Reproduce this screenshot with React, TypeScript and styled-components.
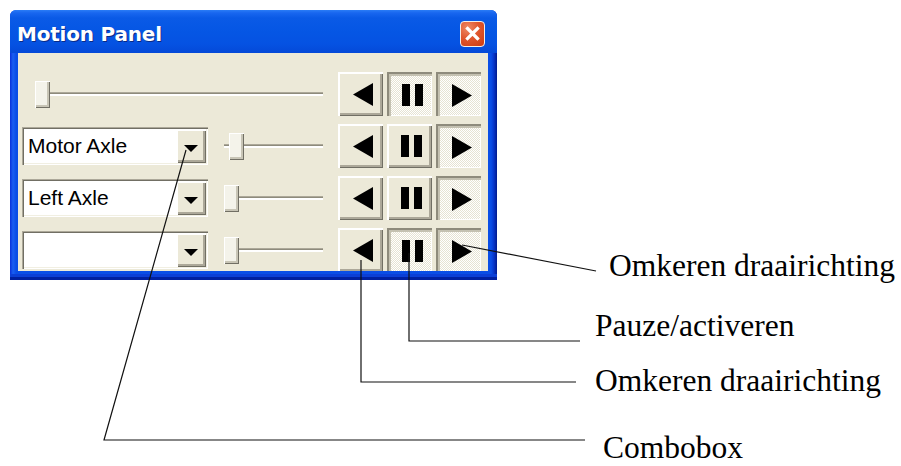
import React from "react";
import styled, { createGlobalStyle, css } from "styled-components";

const Global = createGlobalStyle`
  html, body { margin: 0; padding: 0; background: #ffffff; }
  body {
    width: 901px;
    height: 466px;
    overflow: hidden;
    font-family: "Liberation Sans", Arial, sans-serif;
  }
`;

const Page = styled.div`
  position: relative;
  width: 901px;
  height: 466px;
  padding: 10px 0 0 10px;
  box-sizing: border-box;
`;

const Window = styled.div`
  width: 487px;
  height: 270px;
  box-sizing: border-box;
  display: flex;
  flex-direction: column;
  border-radius: 6px 6px 0 0;
  overflow: hidden;
  padding: 0 9px 9px 8px;
  background: linear-gradient(to right, #0831d9 0px, #1a5ff2 3px, #0a4ee6 6px, #0a4ee6 calc(100% - 6px), #0634c8 calc(100% - 3px), #001a8c 100%);
  box-shadow: inset 0 -3px 0 #0020a0, inset 0 -6px 0 #0b3fd6;
`;

const TitleBar = styled.div`
  height: 43px;
  flex: none;
  margin: 0 -9px 0 -8px;
  padding: 0 12px 0 7px;
  display: flex;
  align-items: center;
  justify-content: space-between;
  background: linear-gradient(to bottom, #2a7cf6 0px, #1866ef 3px, #0a5ae6 8px, #0556e4 22px, #0552e2 34px, #0449d8 43px);
`;

const Title = styled.span`
  font-family: "DejaVu Sans", Verdana, sans-serif;
  font-weight: bold;
  font-size: 20px;
  color: #ffffff;
  letter-spacing: -0.2px;
  text-shadow: 1px 1px 0 #0a2a86;
  margin-top: 4px;
`;

const CloseButton = styled.div`
  width: 25px;
  height: 26px;
  box-sizing: border-box;
  border: 1px solid #f4eee8;
  border-radius: 4px;
  background: radial-gradient(circle at 30% 25%, #ee8a66 0%, #e0572e 45%, #cc3a10 100%);
  display: flex;
  align-items: center;
  justify-content: center;
  margin-top: 4px;
`;

const Content = styled.div`
  flex: 1;
  background: #ece9d8;
  overflow: hidden;
  padding: 19px 7px 0 4px;
  display: flex;
  flex-direction: column;
  gap: 8px;
`;

const Row = styled.div`
  height: 44px;
  flex: none;
  display: flex;
  align-items: center;
`;

const ComboBox = styled.div`
  width: 186px;
  height: 38px;
  box-sizing: border-box;
  margin-right: 16px;
  display: flex;
  align-items: center;
  background: #ffffff;
  padding: 2px;
  box-shadow: inset 1px 1px 0 #aca899, inset 2px 2px 0 #716f64, inset -1px -1px 0 #ffffff, inset -2px -2px 0 #f1efe2;
`;

const ComboText = styled.span`
  flex: 1;
  padding-left: 4px;
  font-family: "Liberation Sans", Arial, sans-serif;
  font-size: 21px;
  color: #000000;
  white-space: nowrap;
  overflow: hidden;
`;

const raised = css`
  background: #ece9d8;
  box-shadow: inset 2px 2px 0 #ffffff, inset -1px -1px 0 #716f64, inset -3px -3px 0 #aca899;
`;

const DropButton = styled.div`
  width: 30px;
  height: 34px;
  flex: none;
  display: flex;
  align-items: center;
  justify-content: center;
  padding-top: 4px;
  box-sizing: border-box;
  ${raised}
`;

const Slider = styled.div<{ $lead?: number }>`
  flex: 1;
  height: 28px;
  margin-left: ${(p) => p.$lead ?? 0}px;
  margin-right: 15px;
  display: flex;
  align-items: center;
  background:
    linear-gradient(to bottom,
      transparent 12px,
      #aca899 12px, #aca899 13px,
      #8e8b7c 13px, #8e8b7c 14px,
      #ffffff 14px, #ffffff 16px,
      transparent 16px);
`;

const Thumb = styled.div<{ $offset: number }>`
  width: 15px;
  height: 27px;
  box-sizing: border-box;
  margin-left: ${(p) => p.$offset}px;
  background: #f4f3ea;
  box-shadow: inset 1px 1px 0 #ffffff, inset -1px -1px 0 #716f64, inset -3px -3px 0 #c8c5b6;
`;

const ButtonGroup = styled.div`
  display: flex;
  gap: 4px;
`;

const MediaButton = styled.div<{ $pressed?: boolean }>`
  width: 45px;
  height: 44px;
  box-sizing: border-box;
  display: flex;
  align-items: center;
  justify-content: center;
  padding-left: 4px;
  ${(p) =>
    p.$pressed
      ? css`
          background: repeating-conic-gradient(#ffffff 0 25%, #e6e3d2 0 50%) 0 0 / 2px 2px;
          box-shadow: inset 2px 2px 0 #8e8b7c, inset 4px 4px 0 #c4c1b1, inset -1px -1px 0 #ffffff;
          padding-left: 6px;
          padding-top: 2px;
        `
      : css`
          ${raised}
        `}
`;

const Annotations = styled.svg`
  position: absolute;
  left: 0;
  top: 0;
  width: 901px;
  height: 466px;
  pointer-events: none;
`;

const Label = styled.span<{ $x: number; $y: number }>`
  position: absolute;
  left: ${(p) => p.$x}px;
  top: ${(p) => p.$y}px;
  font-family: "Liberation Serif", "Times New Roman", serif;
  font-size: 31.5px;
  line-height: 28px;
  color: #000000;
  white-space: nowrap;
`;

const Left = () => (
  <svg width="20" height="23" viewBox="0 0 20 23">
    <polygon points="20,0 20,23 0,11.5" fill="#000" />
  </svg>
);
const Right = () => (
  <svg width="20" height="23" viewBox="0 0 20 23">
    <polygon points="0,0 0,23 20,11.5" fill="#000" />
  </svg>
);
const Pause = () => (
  <svg width="21" height="22" viewBox="0 0 21 22">
    <rect x="0" y="0" width="8" height="22" fill="#000" />
    <rect x="13" y="0" width="8" height="22" fill="#000" />
  </svg>
);
const Down = () => (
  <svg width="14" height="7" viewBox="0 0 14 7">
    <polygon points="0,0 14,0 7,7" fill="#000" />
  </svg>
);
const CloseX = () => (
  <svg width="15" height="15" viewBox="0 0 15 15">
    <path d="M2.5 2.5 L12.5 12.5 M12.5 2.5 L2.5 12.5" stroke="#fff" strokeWidth="3.2" strokeLinecap="square" />
  </svg>
);

type Ctl = { combo?: string | null; lead?: number; offset: number; pressed: [boolean, boolean, boolean] };

const rows: Ctl[] = [
  { lead: 13, offset: 0, pressed: [false, true, true] },
  { combo: "Motor Axle", offset: 5, pressed: [false, false, true] },
  { combo: "Left Axle", offset: 0, pressed: [false, false, true] },
  { combo: "", offset: 0, pressed: [false, true, true] },
];

export default function App() {
  return (
    <>
      <Global />
      <Page>
        <Window>
          <TitleBar>
            <Title>Motion Panel</Title>
            <CloseButton>
              <CloseX />
            </CloseButton>
          </TitleBar>
          <Content>
            {rows.map((r, i) => (
              <Row key={i}>
                {r.combo !== undefined && (
                  <ComboBox>
                    <ComboText>{r.combo}</ComboText>
                    <DropButton>
                      <Down />
                    </DropButton>
                  </ComboBox>
                )}
                <Slider $lead={r.lead}>
                  <Thumb $offset={r.offset} />
                </Slider>
                <ButtonGroup>
                  <MediaButton $pressed={r.pressed[0]}>
                    <Left />
                  </MediaButton>
                  <MediaButton $pressed={r.pressed[1]}>
                    <Pause />
                  </MediaButton>
                  <MediaButton $pressed={r.pressed[2]}>
                    <Right />
                  </MediaButton>
                </ButtonGroup>
              </Row>
            ))}
          </Content>
        </Window>
        <Annotations viewBox="0 0 901 466">
          <g stroke="#111" strokeWidth="1.2" fill="none">
            <line x1="462" y1="245" x2="596" y2="271" />
            <polyline points="409,253 409,341 580,341" />
            <polyline points="361,260 361,382 576,382" />
            <polyline points="186,150 104,440 585,440" />
          </g>
        </Annotations>
        <Label $x={609} $y={252}>Omkeren draairichting</Label>
        <Label $x={595} $y={312}>Pauze/activeren</Label>
        <Label $x={595} $y={367}>Omkeren draairichting</Label>
        <Label $x={603} $y={434}>Combobox</Label>
      </Page>
    </>
  );
}
